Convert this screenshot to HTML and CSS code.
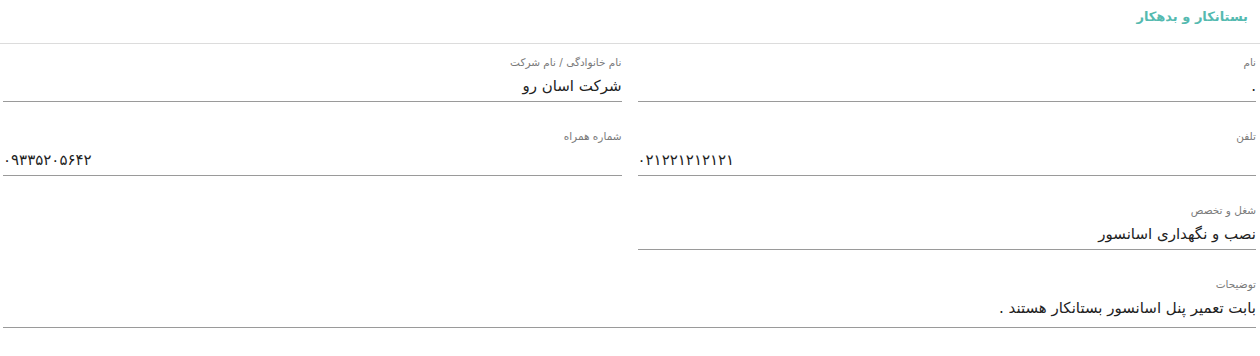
FILE: index.html
```html
<!DOCTYPE html>
<html lang="fa" dir="rtl">
<head>
<meta charset="utf-8">
<link rel="stylesheet" href="styles.css">
</head>
<body>
<div class="header"><h2 class="title">بستانکار و بدهکار</h2></div>
<div class="form">
  <div class="field"><div class="label">نام</div><div class="value">.</div></div>
  <div class="field"><div class="label">نام خانوادگی / نام شرکت</div><div class="value">شرکت اسان رو</div></div>
  <div class="field"><div class="label">تلفن</div><div class="value ltr">۰۲۱۲۲۱۲۱۲۱۲۱</div></div>
  <div class="field"><div class="label">شماره همراه</div><div class="value ltr">۰۹۳۳۵۲۰۵۶۴۲</div></div>
  <div class="field"><div class="label">شغل و تخصص</div><div class="value">نصب و نگهداری اسانسور</div></div>
  <div class="field empty"></div>
  <div class="field wide"><div class="label">توضیحات</div><div class="value tall">بابت تعمیر پنل اسانسور بستانکار هستند .</div></div>
</div>
</body>
</html>
```
FILE: styles.css
```css
* { box-sizing: border-box; }
body {
  margin: 0;
  background: #fff;
  font-family: "DejaVu Sans", "Noto Sans", sans-serif;
  color: #222;
  direction: rtl;
}
.header {
  height: 44px;
  border-bottom: 1px solid #dcdcdc;
  padding: 8px 12px 0 12px;
}
.title {
  margin: 0;
  font-size: 13px;
  line-height: 18px;
  font-weight: bold;
  color: #55bab0;
}
.form {
  display: grid;
  grid-template-columns: 1fr 1fr;
  column-gap: 16px;
  row-gap: 16px;
  padding: 0 4px 0 3px;
}
.field {
  padding-top: 11px;
  border-bottom: 1px solid #9a9a9a;
}
.field.empty { border-bottom: none; }
.field.wide { grid-column: 1 / span 2; }
.label {
  font-size: 10.5px;
  line-height: 14px;
  color: #7a7a7a;
}
.value {
  margin-top: 2px;
  font-size: 15px;
  line-height: 30px;
  color: #222;
}
.value.ltr {
  direction: ltr;
  text-align: left;
  letter-spacing: 0.5px;
}
.value.tall { height: 34px; }
```
